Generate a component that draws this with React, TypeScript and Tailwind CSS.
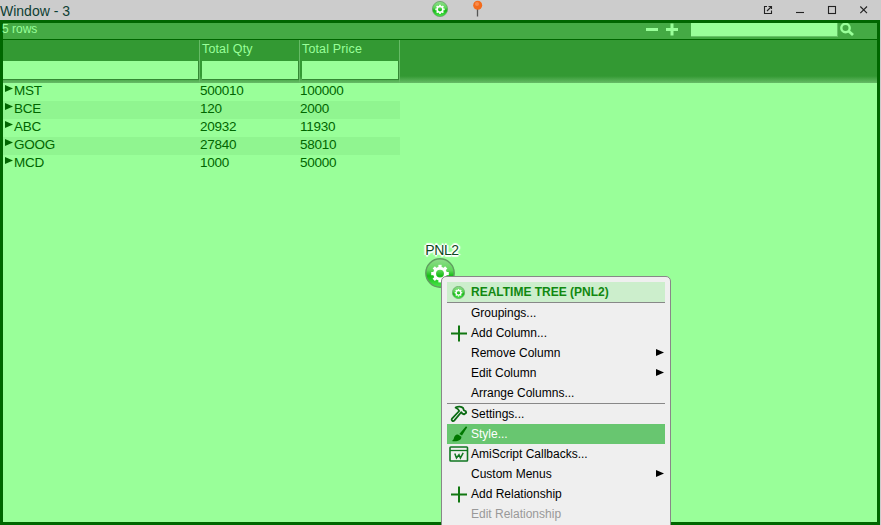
import React from "react";

const rows = [
  ["MST", "500010", "100000"],
  ["BCE", "120", "2000"],
  ["ABC", "20932", "11930"],
  ["GOOG", "27840", "58010"],
  ["MCD", "1000", "50000"],
];

function Gear({ size, id }: { size: number; id: string }) {
  const teeth = [0, 45, 90, 135, 180, 225, 270, 315];
  return (
    <svg width={size} height={size} viewBox="0 0 30 30" className="block shrink-0">
      <defs>
        <linearGradient id={id} x1="0" y1="0" x2="0" y2="1">
          <stop offset="0" stopColor="#8fdc8b" />
          <stop offset="0.4" stopColor="#5fd85a" />
          <stop offset="0.6" stopColor="#18bb18" />
          <stop offset="1" stopColor="#4be84b" />
        </linearGradient>
      </defs>
      <circle cx="15" cy="15" r="14.2" fill={`url(#${id})`} stroke="#5f9e5f" strokeWidth="1.4" />
      <g stroke="#fff" fill="none">
        <circle cx="15" cy="15.6" r="5.4" strokeWidth="2.9" />
        {teeth.map((a) => (
          <path key={a} d="M15 9.6V6.8" strokeWidth="3.2" transform={`rotate(${a} 15 15.6)`} />
        ))}
      </g>
    </svg>
  );
}

function Plus() {
  return (
    <svg width="24" height="20" viewBox="0 0 24 20" className="block">
      <path d="M12 2.5V18.5M4 10.5H20" stroke="#117711" strokeWidth="2" />
    </svg>
  );
}

function Hammer() {
  return (
    <svg width="24" height="20" viewBox="0 0 24 20" className="block" fill="none" stroke="#0b6b14" strokeWidth="1.8" strokeLinejoin="round" strokeLinecap="round">
      <path d="M8.6 3.6C11 2 14.5 2.2 16.2 4.2L16.8 6.2L18.8 7.2L19.2 8.8L17.2 10.4L15.4 9.6L14.2 8.2L7.4 16.4C6 18 3.8 16.4 5 14.6L12.2 7C11.6 5 10.2 4.4 8.6 3.6Z" />
    </svg>
  );
}

function Brush() {
  return (
    <svg width="24" height="20" viewBox="0 0 24 20" className="block" fill="#007700">
      <path d="M19 2.2L20.2 3.2L15 11.6L12.3 10Z" />
      <path d="M11 10.4L14.4 12.7C14.6 16 11 17.9 4.8 17.1C7.4 16 6.4 13.6 8 11.8C8.8 10.8 9.8 10.3 11 10.4Z" />
    </svg>
  );
}

function Script() {
  return (
    <svg width="24" height="20" viewBox="0 0 24 20" className="block" fill="none" stroke="#117722">
      <rect x="3" y="3" width="17.5" height="14" rx="0.8" strokeWidth="1.6" />
      <path d="M3 6.5H20.5" strokeWidth="1.3" />
      <path d="M7.8 9.4L9.5 14L12 10.8L13.4 14L16.2 8.8" strokeWidth="1.5" />
    </svg>
  );
}

function Arrow({ color, className }: { color: string; className: string }) {
  return (
    <svg viewBox="0 0 8 7" className={className}>
      <path d="M0 0L8 3.5L0 7Z" fill={color} />
    </svg>
  );
}

type ItemProps = { label: string; icon?: React.ReactNode; sub?: boolean; active?: boolean; disabled?: boolean };

function Item({ label, icon, sub, active, disabled }: ItemProps) {
  return (
    <div className={`flex h-5 items-center ${active ? "bg-[#68c670] text-white" : disabled ? "text-[#999]" : "text-black"}`}>
      <div className="w-6 shrink-0">{icon}</div>
      <span className="grow leading-5">{label}</span>
      {sub && <Arrow color="#000" className="mb-px mr-[1px] h-[7px] w-2" />}
    </div>
  );
}

export default function App() {
  return (
    <div className="relative flex h-[525px] w-[881px] flex-col overflow-hidden bg-[#ccc] font-['Liberation_Sans',Arial,sans-serif] text-[#006600]">
      <header className="flex h-5 shrink-0 items-start">
        <div className="w-[432px] text-[14px] leading-[22px] text-[#0e4033]">Window - 3</div>
        <div className="mt-[1px]"><Gear size={16} id="titleGear" /></div>
        <svg width="12" height="18" viewBox="0 0 12 18" className="ml-6">
          <path d="M5.5 8V16.5" stroke="#555" strokeWidth="1.3" />
          <circle cx="5.7" cy="5.3" r="4.5" fill="#f36b1c" />
          <circle cx="5" cy="4" r="2" fill="#f98b4b" />
        </svg>
        <svg width="120" height="20" viewBox="0 0 120 20" className="ml-auto mr-[1px]" fill="none" stroke="#222" strokeWidth="1.1">
          <path d="M7 6.5H4.5V13.5H11.5V10.5M8.5 6.5H11.5V9M7 11L11.5 6.5" />
          <path d="M36 12.5H44" />
          <rect x="68.5" y="6.5" width="7" height="7" />
          <path d="M100.3 6.5L107 13.2M107 6.5L100.3 13.2" />
        </svg>
      </header>

      <main className="mr-[1px] flex min-h-0 grow flex-col border-[3px] border-[#006600] bg-[#99ff99]">
        <div className="flex h-[17px] shrink-0 border-b border-[#006600] bg-[#44aa44] text-[12px] leading-[13px] text-[#99ff99]">
          <span className="-ml-px">5 rows</span>
          <svg width="40" height="16" viewBox="0 0 40 16" className="ml-auto" stroke="#99ff99" strokeWidth="3">
            <path d="M3 6.5H15M23 6.5H35M29 0.5V12.5" />
          </svg>
          <div className="ml-2 h-[14px] w-[147px] border-b border-r border-[#66c466] bg-[#99ff99]" />
          <svg width="39" height="16" viewBox="0 0 39 16" fill="none" stroke="#99ff99">
            <circle cx="7.5" cy="5" r="4.2" strokeWidth="2.4" />
            <path d="M10.5 8L15 12" strokeWidth="2.8" />
          </svg>
        </div>
        <div className="flex h-[43px] shrink-0 bg-[linear-gradient(to_bottom,#339933_36px,#66bb66_43px)] text-[12.5px] text-[#99ff99]">
          {["", "Total Qty", "Total Price"].map((title, i) => (
            <div key={i} className={`${i === 0 ? "w-[197px]" : "w-[100px] pl-[2px]"} border-r border-[#66bb66]`}>
              <div className="h-[21px] leading-[19px] tracking-[0.15px]">{title}</div>
              <div className="h-[19px] border-b border-r border-[#338833] bg-[#99ff99]" />
            </div>
          ))}
        </div>
        <div className="w-[397px] text-[13.5px] leading-[15px] tracking-[-0.28px]">
          {rows.map(([name, qty, price], i) => (
            <div key={name} className={`flex h-[18px] ${i % 2 ? "bg-[#90f590]" : ""}`}>
              <div className="flex w-[197px] pl-[2px]">
                <Arrow color="#006600" className="mr-[1px] mt-[2px] h-[7px] w-2" />
                {name}
              </div>
              <div className="w-[100px]">{qty}</div>
              <div className="w-[100px]">{price}</div>
            </div>
          ))}
        </div>
      </main>

      <div className="absolute left-[422px] top-[241px] flex w-[40px] flex-col items-center">
        <div className="text-[14px] leading-[18px] tracking-[-0.4px] text-[#0e4a22] [text-shadow:1px_0_#fff,-1px_0_#fff,0_1px_#fff,0_-1px_#fff,2px_0_1px_#fff,-2px_0_1px_#fff,0_2px_1px_#fff,0_-2px_1px_#fff]">PNL2</div>
        <div className="-mt-[1px] -ml-[4px]"><Gear size={30} id="panelGear" /></div>
      </div>

      <div className="absolute left-[441px] top-[276px] h-[260px] w-[230px] rounded-[5px] border border-[#888] bg-[#efefef] p-[5px] text-[12px]">
        <div className="flex h-[21px] items-center border-b border-[#888] bg-[#cceecc] font-bold text-[#118811]">
          <div className="w-6 pl-[5px]"><Gear size={13} id="menuGear" /></div>
          REALTIME TREE (PNL2)
        </div>
        <Item label="Groupings..." />
        <Item label="Add Column..." icon={<Plus />} />
        <Item label="Remove Column" sub />
        <Item label="Edit Column" sub />
        <Item label="Arrange Columns..." />
        <div className="h-px bg-[#888]" />
        <Item label="Settings..." icon={<Hammer />} />
        <Item label="Style..." icon={<Brush />} active />
        <Item label="AmiScript Callbacks..." icon={<Script />} />
        <Item label="Custom Menus" sub />
        <Item label="Add Relationship" icon={<Plus />} />
        <Item label="Edit Relationship" disabled />
      </div>
    </div>
  );
}
